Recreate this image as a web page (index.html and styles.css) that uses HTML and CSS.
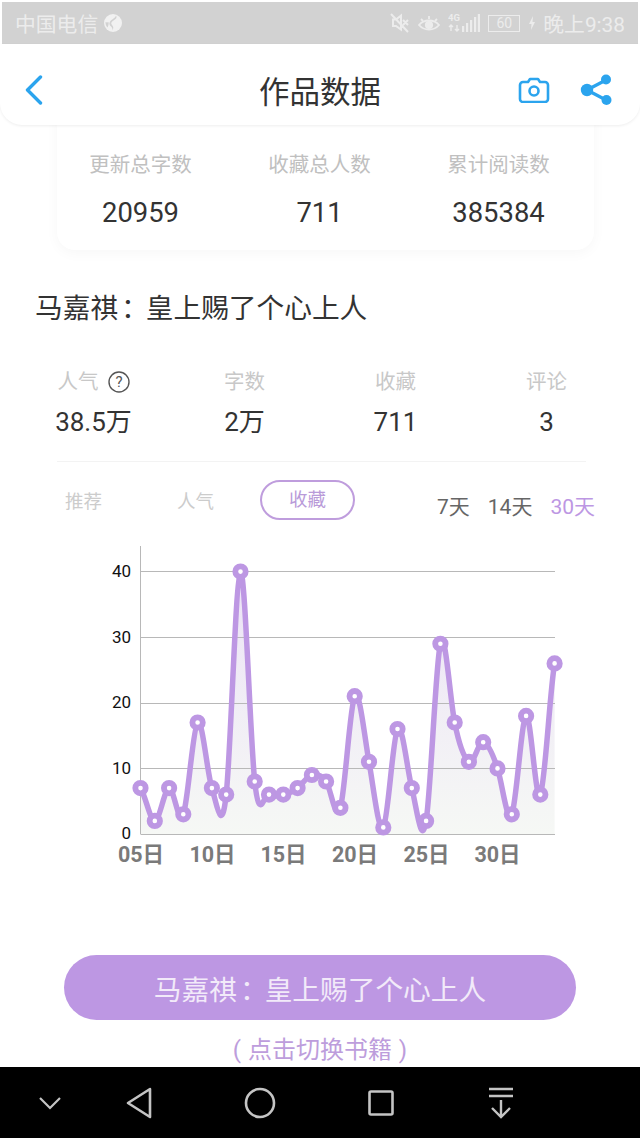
FILE: index.html
```html
<!DOCTYPE html>
<html lang="zh">
<head>
<meta charset="utf-8">
<title>作品数据</title>
<link rel="stylesheet" href="styles.css">
</head>
<body>
<div class="screen">
  <div class="status">
    <div class="status-left">
      <span>中国电信</span>
      <svg class="ico-globe" viewBox="0 0 18 18" width="18" height="18"><circle cx="9" cy="9" r="9" fill="#f1f1f1"/><path d="M12 1.500c1.500 2-.5 4-2.500 5s-3 3-1.500 4.500 2 3.500 0 5.500c1-2 0-3-1.500-4.500S5 8 7.500 6 11.500 3.500 12 1.500z" fill="#d2d2d2"/><path d="M1.500 8c1 .5 2 .5 3 0 .5 2-.5 4.500-1 5.500-1.500-1.500-2-3.500-2-5.500z" fill="#d2d2d2"/></svg>
    </div>
    <div class="status-right">
      <svg viewBox="0 0 20 20" width="20" height="20" fill="none" stroke="#ececec" stroke-width="2"><path d="M3 6.500h3l5-4v14l-5-3.500H3zM13 7l5 5M18 7l-5 5M1 1l17 18"/></svg>
      <svg viewBox="0 0 22 17" width="22" height="17" fill="none" stroke="#ececec" stroke-width="1.800"><path d="M1 10c5-6 15-6 20 0-5 6-15 6-20 0z"/><circle cx="11" cy="10" r="3.200" fill="#ececec"/><path d="M3 4l2 2M11 1v3M19 4l-2 2"/></svg>
      <svg viewBox="0 0 32 22" width="32" height="22" fill="#ececec"><text x="0" y="9" class="net">4G</text><path d="M3 19v-6M1 15l2-2 2 2M9 13v6M7 17l2 2 2-2" fill="none" stroke="#ececec" stroke-width="1.400"/><rect x="14" y="14" width="2.200" height="6"/><rect x="18" y="11" width="2.200" height="9"/><rect x="22" y="8" width="2.200" height="12"/><rect x="26" y="5" width="2.200" height="15"/><rect x="29.800" y="2" width="2.200" height="18"/></svg>
      <div class="battery"><span>60</span></div>
      <svg class="ico-bolt" viewBox="0 0 6 14" width="6" height="14"><path d="M4 0L0 8h2.500L2 14l4-8H3.500z" fill="#ececec"/></svg>
      <span class="clock">晚上9:38</span>
    </div>
  </div>

  <header class="head">
    <div class="head-left">
      <svg viewBox="0 0 18 30" width="18" height="30" fill="none" stroke="#2ba4ee" stroke-width="3.400" stroke-linecap="round" stroke-linejoin="round"><path d="M15.500 2L2.500 15l13 13"/></svg>
    </div>
    <h1 class="head-title">作品数据</h1>
    <div class="head-right">
      <svg viewBox="0 0 32 26" width="32" height="26" fill="none" stroke="#2ba4ee" stroke-width="2.600" stroke-linejoin="round"><path d="M10 5l2-3h8l2 3h5a3 3 0 0 1 3 3v14a3 3 0 0 1-3 3H5a3 3 0 0 1-3-3V8a3 3 0 0 1 3-3z"/><circle cx="16" cy="14" r="4.500"/></svg>
      <svg viewBox="0 0 32 32" width="32" height="32"><path d="M7 16L26 6M7 16l19 10" stroke="#2ba4ee" stroke-width="3.200" fill="none"/><circle cx="7" cy="16" r="6.200" fill="#2ba4ee"/><circle cx="26" cy="5.500" r="5" fill="#2ba4ee"/><circle cx="26.500" cy="26" r="5" fill="#2ba4ee"/></svg>
    </div>
  </header>

  <section class="card">
    <div class="card-grid">
      <div class="card-cell"><div class="card-label">更新总字数</div><div class="card-num">20959</div></div>
      <div class="card-cell"><div class="card-label">收藏总人数</div><div class="card-num">711</div></div>
      <div class="card-cell"><div class="card-label">累计阅读数</div><div class="card-num">385384</div></div>
    </div>
  </section>

  <h2 class="book">马嘉祺<span class="colon">：</span>皇上赐了个心上人</h2>

  <section class="stats">
    <div class="stat">
      <div class="stat-label">人气<svg class="ico-help" viewBox="0 0 22 22" width="22" height="22"><circle cx="11" cy="11" r="10" fill="none" stroke="#555" stroke-width="1.400"/><text x="11" y="16" text-anchor="middle" class="help-q">?</text></svg></div>
      <div class="stat-num">38.5万</div>
    </div>
    <div class="stat"><div class="stat-label">字数</div><div class="stat-num">2万</div></div>
    <div class="stat"><div class="stat-label">收藏</div><div class="stat-num">711</div></div>
    <div class="stat"><div class="stat-label">评论</div><div class="stat-num">3</div></div>
  </section>

  <div class="rule"></div>

  <section class="filters">
    <div class="tabs">
      <span class="tab">推荐</span>
      <span class="tab">人气</span>
      <span class="tab tab-on">收藏</span>
    </div>
    <div class="ranges">
      <span>7天</span>
      <span>14天</span>
      <span class="range-on">30天</span>
    </div>
  </section>

  <svg class="chart" viewBox="0 540 640 330" width="640" height="330">
    <defs>
      <linearGradient id="areaFill" x1="0" y1="0" x2="0" y2="1">
        <stop offset="0" stop-color="#f6f8f5"/>
        <stop offset="1" stop-color="#ebe2f6"/>
      </linearGradient>
    </defs>
    <g transform="translate(140.500 834) scale(14.28 -6.56)">
      <path class="area" d="M0 0V7C.33 6 .67 2 1 2C1.330 2 1.670 6.800 2 7C2.330 7.200 2.670 1 3 3C3.330 5 3.670 16.200 4 17C4.330 17.800 4.670 9.200 5 7C5.330 4.800 5.670 -.6 6 6C6.330 12.600 6.670 39.600 7 40C7.330 40.400 7.670 14.800 8 8C8.330 1.200 8.670 6.400 9 6C9.330 5.600 9.670 5.800 10 6C10.330 6.200 10.670 6.400 11 7C11.330 7.600 11.670 8.800 12 9C12.330 9.200 12.670 9 13 8C13.330 7 13.670 1.400 14 4C14.330 6.600 14.670 19.600 15 21C15.330 22.400 15.670 15 16 11C16.330 7 16.670 0 17 1C17.330 2 17.670 14.800 18 16C18.330 17.200 18.670 9.800 19 7C19.330 4.200 19.670 -2.400 20 2C20.330 6.400 20.670 26 21 29C21.330 32 21.670 20.600 22 17C22.330 13.400 22.670 11.600 23 11C23.330 10.400 23.670 14.200 24 14C24.330 13.800 24.670 12.200 25 10C25.330 7.800 25.670 1.400 26 3C26.330 4.600 26.670 17.400 27 18C27.330 18.600 27.670 4.400 28 6C28.330 7.600 28.670 22 29 26V0Z"/>
    </g>
    <g class="grid-lines">
      <path d="M140.500 571.500H555M140.500 637.500H555M140.500 703.500H555M140.500 768.500H555M140.500 834.500H555"/>
      <path d="M140.500 546V834"/>
    </g>
    <g class="y-labels" text-anchor="end">
      <text x="131" y="577">40</text>
      <text x="131" y="643">30</text>
      <text x="131" y="708">20</text>
      <text x="131" y="774">10</text>
      <text x="131" y="839">0</text>
    </g>
    <g class="x-labels" text-anchor="middle">
      <text x="141" y="862">05日</text>
      <text x="212.500" y="862">10日</text>
      <text x="283.500" y="862">15日</text>
      <text x="355" y="862">20日</text>
      <text x="426.500" y="862">25日</text>
      <text x="497.500" y="862">30日</text>
    </g>
    <g transform="translate(140.500 834) scale(14.28 -6.56)">
      <path class="line" d="M0 7C.33 6 .67 2 1 2C1.330 2 1.670 6.800 2 7C2.330 7.200 2.670 1 3 3C3.330 5 3.670 16.200 4 17C4.330 17.800 4.670 9.200 5 7C5.330 4.800 5.670 -.6 6 6C6.330 12.600 6.670 39.600 7 40C7.330 40.400 7.670 14.800 8 8C8.330 1.200 8.670 6.400 9 6C9.330 5.600 9.670 5.800 10 6C10.330 6.200 10.670 6.400 11 7C11.330 7.600 11.670 8.800 12 9C12.330 9.200 12.670 9 13 8C13.330 7 13.670 1.400 14 4C14.330 6.600 14.670 19.600 15 21C15.330 22.400 15.670 15 16 11C16.330 7 16.670 0 17 1C17.330 2 17.670 14.800 18 16C18.330 17.200 18.670 9.800 19 7C19.330 4.200 19.670 -2.400 20 2C20.330 6.400 20.670 26 21 29C21.330 32 21.670 20.600 22 17C22.330 13.400 22.670 11.600 23 11C23.330 10.400 23.670 14.200 24 14C24.330 13.800 24.670 12.200 25 10C25.330 7.800 25.670 1.400 26 3C26.330 4.600 26.670 17.400 27 18C27.330 18.600 27.670 4.400 28 6C28.330 7.600 28.670 22 29 26"/>
    </g>
    <g class="dots">
      <circle cx="140.500" cy="788.100" r="5.200"/><circle cx="154.800" cy="820.900" r="5.200"/><circle cx="169.100" cy="788.100" r="5.200"/><circle cx="183.300" cy="814.300" r="5.200"/><circle cx="197.600" cy="722.500" r="5.200"/><circle cx="211.900" cy="788.100" r="5.200"/><circle cx="226.200" cy="794.600" r="5.200"/><circle cx="240.500" cy="571.600" r="5.200"/><circle cx="254.700" cy="781.500" r="5.200"/><circle cx="269" cy="794.600" r="5.200"/>
      <circle cx="283.300" cy="794.600" r="5.200"/><circle cx="297.600" cy="788.100" r="5.200"/><circle cx="311.900" cy="775" r="5.200"/><circle cx="326.100" cy="781.500" r="5.200"/><circle cx="340.400" cy="807.800" r="5.200"/><circle cx="354.700" cy="696.200" r="5.200"/><circle cx="369" cy="761.800" r="5.200"/><circle cx="383.300" cy="827.400" r="5.200"/><circle cx="397.500" cy="729" r="5.200"/><circle cx="411.800" cy="788.100" r="5.200"/>
      <circle cx="426.100" cy="820.900" r="5.200"/><circle cx="440.400" cy="643.800" r="5.200"/><circle cx="454.700" cy="722.500" r="5.200"/><circle cx="468.900" cy="761.800" r="5.200"/><circle cx="483.200" cy="742.200" r="5.200"/><circle cx="497.500" cy="768.400" r="5.200"/><circle cx="511.800" cy="814.300" r="5.200"/><circle cx="526.100" cy="715.900" r="5.200"/><circle cx="540.300" cy="794.600" r="5.200"/><circle cx="554.600" cy="663.400" r="5.200"/>
    </g>
  </svg>

  <button class="switch">马嘉祺<span class="colon">：</span>皇上赐了个心上人</button>
  <div class="switch-hint">( 点击切换书籍 )</div>

  <nav class="nav">
    <svg class="nav-first" viewBox="0 0 24 14" width="24" height="14" fill="none" stroke="#c4c4c4" stroke-width="2.200"><path d="M2 2l10 10L22 2"/></svg>
    <svg viewBox="0 0 26 32" width="26" height="32" fill="none" stroke="#c4c4c4" stroke-width="2.600" stroke-linejoin="round"><path d="M24 2L2 16l22 14z"/></svg>
    <svg viewBox="0 0 32 32" width="32" height="32" fill="none" stroke="#c4c4c4" stroke-width="2.600"><circle cx="16" cy="16" r="14"/></svg>
    <svg viewBox="0 0 28 28" width="28" height="28" fill="none" stroke="#c4c4c4" stroke-width="2.600" stroke-linejoin="round"><rect x="1.500" y="2.500" width="23" height="23" rx="1.500"/></svg>
    <svg viewBox="0 0 26 32" width="26" height="32" fill="none" stroke="#c4c4c4" stroke-width="2.400"><path d="M1 2h24M1 9h24M13 13v17M4 21l9 9 9-9"/></svg>
  </nav>
</div>
</body>
</html>
```

FILE: styles.css
```css
* { box-sizing: border-box; }
html, body { margin: 0; padding: 0; background: #fff; }
body { font-family: Roboto, "Noto Sans CJK SC", sans-serif; }
.screen { width: 640px; height: 1138px; overflow: hidden; display: flex; flex-direction: column; background: #fff; }
.colon { padding-left: 3px; letter-spacing: -3px; }

.status { height: 42px; margin: 2px 2px 0; padding: 0 13px; background: #d2d2d2; color: #ececec; font-size: 20.800px; display: flex; align-items: center; justify-content: space-between; flex: none; }
.status-left { display: flex; align-items: center; gap: 6px; }
.status-right { display: flex; align-items: center; gap: 8px; }
.net { font-size: 9.500px; font-weight: 700; fill: #ececec; }
.battery { width: 32px; height: 17px; border: 1px solid #ececec; font-size: 14px; line-height: 15px; text-align: center; }
.ico-bolt { margin-left: 1px; }

.head { height: 81px; padding-top: 10px; flex: none; background: #fff; border-radius: 0 0 22px 22px; box-shadow: 0 1px 3px rgba(0,0,0,.07); display: grid; grid-template-columns: 1fr auto 1fr; align-items: center; position: relative; z-index: 2; }
.head-left { padding-left: 25px; display: flex; }
.head-title { margin: 0; font-size: 30.500px; font-weight: 400; color: #333; }
.head-right { display: flex; justify-content: flex-end; align-items: center; gap: 30px; padding-right: 28px; }

.card { margin: -20px 46px 0 57px; height: 145px; padding-top: 45px; background: #fff; border-radius: 18px; box-shadow: 0 3px 14px rgba(0,0,0,.035); flex: none; }
.card-grid { display: grid; grid-template-columns: repeat(3, 179px); margin-left: -6px; }
.card-cell { text-align: center; }
.card-label { font-size: 20.500px; line-height: 30px; color: #c0c0c0; }
.card-num { font-size: 27.400px; line-height: 34px; margin-top: 16px; color: #333; }

.book { margin: 42px 0 0 35px; font-size: 27.700px; line-height: 34px; font-weight: 400; color: #333; flex: none; }

.stats { display: grid; grid-template-columns: repeat(4, 151px); padding-left: 18px; margin-top: 41px; flex: none; }
.stat { text-align: center; }
.stat-label { font-size: 20.500px; line-height: 30px; color: #c8c8c8; display: flex; justify-content: center; align-items: center; gap: 9px; }
.help-q { font-size: 15px; fill: #555; }
.stat-num { font-size: 26px; line-height: 34px; margin-top: 8px; color: #333; }

.rule { height: 1px; margin: 22px 54px 0 57px; background: #f3f3f3; flex: none; }

.filters { display: flex; justify-content: space-between; align-items: flex-start; margin-top: 18px; padding: 0 45px 0 46px; height: 61px; flex: none; }
.tabs { display: flex; align-items: center; height: 40px; }
.tab { font-size: 18.500px; color: #cccccc; width: 75px; margin-right: 37px; text-align: center; }
.tab-on { color: #b99bd9; width: 95px; height: 40px; line-height: 36px; border: 2px solid #bf9ddd; border-radius: 20px; margin: 0 0 0 -10px; }
.ranges { display: flex; gap: 18px; font-size: 21px; line-height: 30px; color: #666; margin-top: 12px; }
.range-on { color: #bd97e3; }

.chart { display: block; flex: none; margin-top: -1px; }
.grid-lines path { stroke: #b8b8b8; stroke-width: 1; fill: none; }
.y-labels text { font-size: 17px; fill: #111; }
.x-labels text { font-size: 21.500px; font-weight: 700; fill: #7a7a7a; }
.area { fill: url(#areaFill); stroke: none; }
.line { fill: none; stroke: #bd97e3; stroke-width: 5.500; vector-effect: non-scaling-stroke; stroke-linejoin: round; }
.dots circle { fill: #fff; stroke: #bd97e3; stroke-width: 5.800; }

.switch { display: block; width: 512px; height: 65px; margin: 85px 0 0 64px; padding: 0; border: 0; border-radius: 33px; background: #bd97e3; color: #f2eaf9; font-family: inherit; font-size: 27.700px; flex: none; }
.switch-hint { margin-top: 14px; text-align: center; font-size: 24px; line-height: 32px; word-spacing: 1px; color: #bd9ddc; flex: none; }

.nav { margin-top: auto; height: 71px; flex: none; background: #000; display: flex; align-items: center; gap: 92px; padding-left: 38px; }
.nav-first { margin-right: -28px; }
```
